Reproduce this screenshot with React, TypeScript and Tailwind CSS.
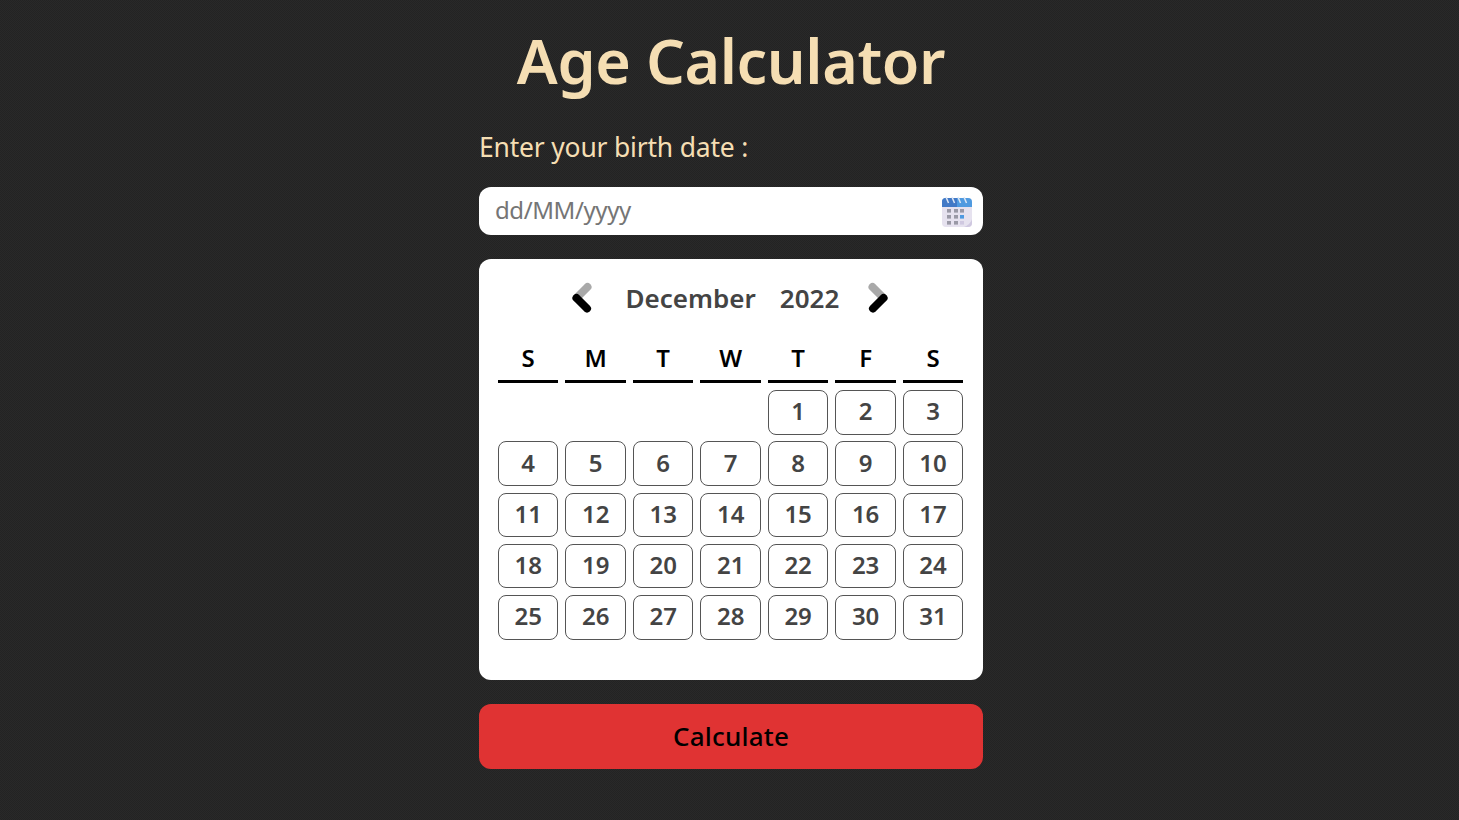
const heads = ["S", "M", "T", "W", "T", "F", "S"];
const days: (number | null)[] = [null, null, null, null, ...Array.from({ length: 31 }, (_, i) => i + 1)];

function Chevron({ right }: { right?: boolean }) {
  return (
    <svg width="24" height="34" viewBox="0 0 24 34" className={right ? "" : "-scale-x-100"}>
      <line x1="5.5" y1="6" x2="16.5" y2="17" stroke="#a9a9a9" strokeWidth="8" strokeLinecap="round" />
      <line x1="16.5" y1="17" x2="6" y2="27.5" stroke="#000" strokeWidth="8" strokeLinecap="round" />
    </svg>
  );
}

function CalendarIcon() {
  return (
    <svg width="32" height="32" viewBox="0 0 32 32">
      <rect x="2" y="3" width="30" height="29" rx="4" fill="#e6e2ef" />
      <path d="M2 12V7a4 4 0 0 1 4-4h22a4 4 0 0 1 4 4v5z" fill="#4f9ae0" />
      <path d="M2 12V7a4 4 0 0 1 4-4h11v9z" fill="#4279c6" />
      <path d="M32 24v4a4 4 0 0 1-4 4h-4c3-1 7-4 8-8z" fill="#cfc8e0" />
      {[6, 12, 18, 24].map((x) => (
        <line key={x} x1={x} y1="2" x2={x + 2.5} y2="8" stroke="#dfe8f5" strokeWidth="1.5" />
      ))}
      {[14, 20, 26].map((y) =>
        [7, 14, 20].map((x) => (
          <rect key={`${x}-${y}`} x={x} y={y} width="4" height="3.6" fill={x === 20 && y === 20 ? "#4f9ae0" : x === 20 && y === 26 ? "#cfc8e0" : "#9a99a6"} />
        ))
      )}
    </svg>
  );
}

export default function App() {
  return (
    <div className="min-h-[820px] bg-[#262626] bg-[repeating-conic-gradient(#292929_0_25%,#232323_0_50%)] bg-[length:2px_2px] pl-[3px] flex flex-col items-center font-['Noto_Sans','Open_Sans',sans-serif]">
      <h1 className="mt-[24px] h-[76px] leading-[74px] text-[61px] font-semibold text-[#f5deb3] tracking-[-0.4px] text-center">Age Calculator</h1>
      <div className="w-[504px] mt-[33px] flex flex-col">
        <label className="h-[28px] leading-[28px] text-[26.5px] text-[#f5deb3] tracking-[-0.2px]">Enter your birth date :</label>
        <div className="mt-[26px] h-[48px] bg-white rounded-[12px] flex items-center justify-between pl-[16px] pr-[11px]">
          <span className="text-[24px] leading-[46px] mb-[2px] text-[#757575] tracking-[-0.4px]">dd/MM/yyyy</span>
          <CalendarIcon />
        </div>
        <div className="mt-[24px] h-[421px] bg-white rounded-[12px] pl-[18.9px] flex flex-col">
          <div className="mt-[22px] h-[34px] pr-[21px] flex items-center justify-center">
            <Chevron />
            <span className="ml-[33px] text-[26px] font-semibold text-[#444]">December</span>
            <span className="ml-[24px] mr-[28px] text-[26px] font-semibold text-[#444]">2022</span>
            <Chevron right />
          </div>
          <div className="mt-[26px] grid grid-cols-[repeat(7,60.6px)] gap-x-[6.9px]">
            {heads.map((h, i) => (
              <div key={i} className="h-[42px] leading-[34px] border-b-[3px] border-black text-center text-[24px] font-semibold text-black">{h}</div>
            ))}
          </div>
          <div className="mt-[7.2px] grid grid-cols-[repeat(7,60.6px)] gap-x-[6.9px] gap-y-[6.85px]">
            {days.map((d, i) =>
              d === null ? (
                <div key={i} className="h-[44.4px]" />
              ) : (
                <div key={i} className="h-[44.4px] pb-[2px] border border-[#555] rounded-[8px] flex items-center justify-center text-[24px] font-semibold text-[#444]">{d}</div>
              )
            )}
          </div>
        </div>
        <button className="mt-[24px] h-[65px] bg-[#e03333] rounded-[12px] text-[26px] tracking-[0.2px] font-medium text-black">Calculate</button>
      </div>
    </div>
  );
}
